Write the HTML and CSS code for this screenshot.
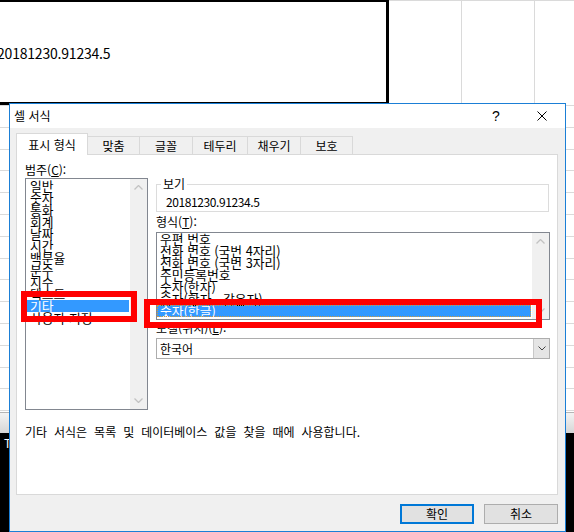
FILE: index.html
```html
<!DOCTYPE html>
<html lang="ko">
<head>
<meta charset="utf-8">
<title>셀 서식</title>
<link rel="stylesheet" href="styles.css">
</head>
<body>
<div class="screen">
  <div class="sheet">
    <div class="top-row">
      <div class="merged"><span class="cell-text">20181230.91234.5</span></div>
      <div class="col col-a"></div>
      <div class="col col-b"></div>
      <div class="col col-c"></div>
    </div>
    <div class="rows"></div>
    <div class="sheet-tabs"></div>
    <div class="taskbar"><span class="task-t">T</span></div>
  </div>

  <div class="dialog">
    <div class="titlebar">
      <span class="title">셀 서식</span>
      <span class="tb-btn help">?</span>
      <span class="tb-btn close"><svg width="10" height="10" viewBox="0 0 10 10"><path d="M0.5 0.5 L9.5 9.5 M9.5 0.5 L0.5 9.5" stroke="#000" stroke-width="1" fill="none"/></svg></span>
    </div>
    <div class="dlg-body">
      <div class="tabs">
        <div class="tab active">표시 형식</div>
        <div class="tab t-align">맞춤</div>
        <div class="tab t-font">글꼴</div>
        <div class="tab t-border">테두리</div>
        <div class="tab t-fill">채우기</div>
        <div class="tab t-prot">보호</div>
      </div>
      <div class="panel">
        <div class="panel-grid">
          <div class="left-col">
            <div class="label lbl-cat">범주(<u>C</u>):</div>
            <div class="listbox cat-list">
              <ul class="items">
                <li>일반</li>
                <li>숫자</li>
                <li>통화</li>
                <li>회계</li>
                <li>날짜</li>
                <li>시간</li>
                <li>백분율</li>
                <li>분수</li>
                <li>지수</li>
                <li>텍스트</li>
                <li class="sel">기타</li>
                <li>사용자 지정</li>
              </ul>
              <div class="vscroll">
                <span class="arrow"><svg width="9" height="5" viewBox="0 0 9 5"><polyline points="0.5,4.5 4.5,0.5 8.5,4.5" fill="none" stroke="#c2c2c2" stroke-width="1.3"/></svg></span>
                <span class="arrow"><svg width="9" height="5" viewBox="0 0 9 5"><polyline points="0.5,0.5 4.5,4.5 8.5,0.5" fill="none" stroke="#c2c2c2" stroke-width="1.3"/></svg></span>
              </div>
            </div>
          </div>
          <div class="right-col">
            <div class="preview">
              <div class="legend">보기</div>
              <div class="preview-value">20181230.91234.5</div>
            </div>
            <div class="label lbl-type">형식(<u>T</u>):</div>
            <div class="listbox type-list">
              <ul class="items">
                <li>우편 번호</li>
                <li>전화 번호 (국번 4자리)</li>
                <li>전화 번호 (국번 3자리)</li>
                <li>주민등록번호</li>
                <li>숫자(한자)</li>
                <li>숫자(한자 - 갖은자)</li>
                <li class="sel focus">숫자(한글)</li>
              </ul>
              <div class="vscroll">
                <span class="arrow"><svg width="9" height="5" viewBox="0 0 9 5"><polyline points="0.5,4.5 4.5,0.5 8.5,4.5" fill="none" stroke="#c2c2c2" stroke-width="1.3"/></svg></span>
                <span class="arrow"><svg width="9" height="5" viewBox="0 0 9 5"><polyline points="0.5,0.5 4.5,4.5 8.5,0.5" fill="none" stroke="#c2c2c2" stroke-width="1.3"/></svg></span>
              </div>
            </div>
            <div class="label lbl-locale">로캘(위치)(<u>L</u>):</div>
            <div class="combo">
              <span class="combo-text">한국어</span>
              <span class="combo-btn"><svg width="8" height="5" viewBox="0 0 8 5"><polyline points="0.5,0.5 4,4 7.5,0.5" fill="none" stroke="#444" stroke-width="1"/></svg></span>
            </div>
          </div>
        </div>
        <p class="desc">기타 서식은 목록 및 데이터베이스 값을 찾을 때에 사용합니다.</p>
      </div>
      <div class="buttons">
        <div class="btn default">확인</div>
        <div class="btn">취소</div>
      </div>
    </div>
    <div class="mark mark-cat"></div>
    <div class="mark mark-type"></div>
  </div>
</div>
</body>
</html>
```

FILE: styles.css
```css
* { box-sizing: border-box; }
html, body { margin: 0; padding: 0; }
body {
  width: 574px;
  height: 532px;
  overflow: hidden;
  background: #fff;
  font-family: "Noto Sans CJK KR", "Noto Sans", sans-serif;
  font-size: 12px;
  color: #000;
}
.screen { position: relative; width: 574px; height: 532px; overflow: hidden; }

/* background spreadsheet */
.sheet { display: flex; flex-direction: column; height: 532px; }
.top-row { display: flex; height: 105px; flex: none; }
.merged {
  width: 389px;
  border-top: 2px solid #000;
  border-right: 3px solid #000;
  border-bottom: 3px solid #000;
  display: flex;
  align-items: center;
}
.cell-text { font-size: 14px; line-height: 16px; margin-left: -3px; margin-top: 1px; letter-spacing: -0.2px; }
.col { border-top: 1px solid #dadada; border-right: 1px solid #dadada; }
.col-a { width: 73px; }
.col-b { width: 73px; }
.col-c { flex: 1; border-right: none; }
.rows {
  height: 307px;
  flex: none;
  background: repeating-linear-gradient(to bottom, #dadada 0, #dadada 1px, transparent 1px, transparent 21.8px);
}
.sheet-tabs {
  height: 21px;
  flex: none;
  border-top: 1px solid #b4b4b4;
  background: linear-gradient(#f3f3f3, #d6d6d6);
}
.taskbar { flex: 1; background: #000; color: #fff; padding: 4px 0 0 4px; font-size: 12px; line-height: 12px; }

/* dialog */
.dialog {
  position: absolute;
  left: 9px;
  top: 103px;
  width: 557px;
  height: 429px;
  border: 1px solid #1b7fd6;
  background: #f0f0f0;
  display: flex;
  flex-direction: column;
}
.titlebar { height: 24px; flex: none; background: #fff; display: flex; align-items: center; }
.title { flex: 1; padding-left: 4px; line-height: 14px; }
.tb-btn { width: 46px; height: 24px; display: flex; align-items: center; justify-content: center; }
.help { font-family: "Liberation Sans", sans-serif; font-size: 14px; }

.dlg-body { flex: 1; padding: 5px 7px 0 6px; display: flex; flex-direction: column; }
.tabs { display: flex; align-items: flex-end; height: 22px; margin-bottom: -1px; flex: none; }
.tab {
  height: 19px;
  border-top: 1px solid #d9d9d9;
  border-right: 1px solid #d9d9d9;
  background: #f0f0f0;
  display: flex;
  align-items: center;
  justify-content: center;
  line-height: 14px;
}
.tab.active {
  width: 72px;
  height: 22px;
  border: 1px solid #d9d9d9;
  border-bottom: none;
  background: #fff;
  position: relative;
  z-index: 1;
}
.t-align { width: 52px; }
.t-font { width: 53px; }
.t-border { width: 55px; }
.t-fill { width: 53px; }
.t-prot { width: 52px; }

.panel { height: 341px; flex: none; background: #fff; border: 1px solid #d9d9d9; }
.panel-grid {
  display: grid;
  grid-template-columns: 123px 394px;
  column-gap: 8px;
  padding: 7px 0 0 8px;
  align-items: start;
}
.label { line-height: 14px; white-space: nowrap; }
.lbl-cat { line-height: 16px; height: 16px; }
.lbl-type { margin: 3px 0; }
.lbl-locale { margin: 1px 0 3px; }

.listbox { border: 1px solid #828790; background: #fff; display: flex; }
.cat-list { height: 232px; }
.type-list { height: 88px; }
.items { list-style: none; margin: 0; flex: 1; overflow: hidden; }
.cat-list .items { padding: 1px 1px 0 1px; }
.type-list .items { padding: 0 1px 0 0; }
.items li { height: 12px; line-height: 12px; padding-left: 3px; white-space: nowrap; font-size: 12.8px; }
.items li.sel { background: #3399ff; color: #fff; }
.items li.focus { outline: 1px dotted #d49a3c; outline-offset: -1px; }
.vscroll { width: 17px; flex: none; background: #f0f0f0; display: flex; flex-direction: column; justify-content: space-between; }
.arrow { height: 17px; display: flex; align-items: center; justify-content: center; }

.preview { margin-top: 22px; height: 28px; border: 1px solid #dcdcdc; width: 393px; }
.legend { width: fit-content; margin: -8px 0 0 4px; padding: 0 2px; background: #fff; line-height: 14px; height: 14px; }
.preview-value { margin-top: 4px; padding-left: 9px; line-height: 14px; letter-spacing: -0.4px; }

.combo { height: 21px; border: 1px solid #adadad; background: #fff; display: flex; }
.combo-text { flex: 1; padding-left: 3px; line-height: 19px; }
.combo-btn { width: 16px; background: #e5e5e5; border-left: 1px solid #c8c8c8; display: flex; align-items: center; justify-content: center; }

.desc { margin: 15px 0 0 8px; line-height: 14px; word-spacing: 3.6px; }

.buttons { display: flex; justify-content: flex-end; gap: 10px; margin-top: 9px; flex: none; }
.btn {
  width: 74px;
  height: 20px;
  border: 1px solid #adadad;
  background: #e1e1e1;
  display: flex;
  align-items: center;
  justify-content: center;
  line-height: 14px;
}
.btn.default { border: 2px solid #0078d7; }

/* red annotation boxes */
.mark { position: absolute; border: 6px solid #ff0000; }
.mark-cat { left: 11px; top: 187px; width: 116px; height: 31px; }
.mark-type { left: 134px; top: 195px; width: 398px; height: 29px; }
```
